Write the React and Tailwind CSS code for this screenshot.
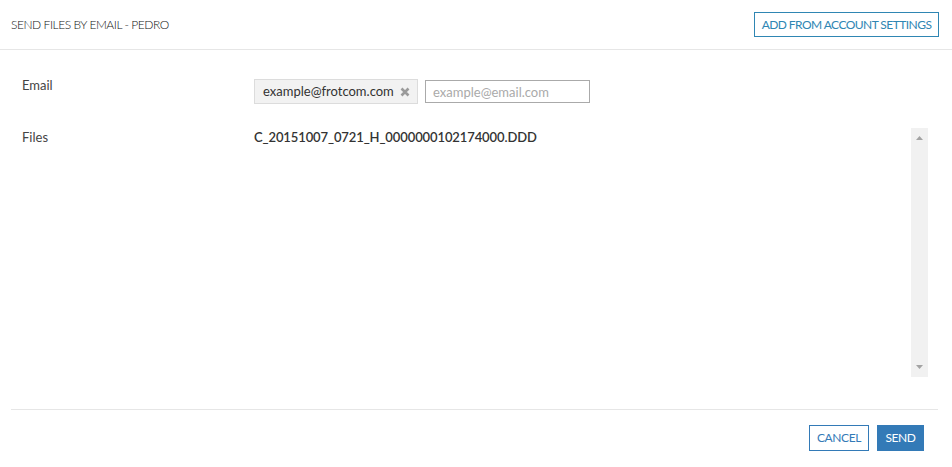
import React from "react";

const App = () => {
  return (
    <div className="w-[952px] h-[467px] bg-white text-[#333] font-['Lato',sans-serif]">
      {/* Header */}
      <div className="h-[50px] flex items-center justify-between pl-[11px] pr-[13px] border-b border-[#e6e6e6]">
        <div className="text-[12px] font-light tracking-[-0.45px] text-[#111]">SEND FILES BY EMAIL - PEDRO</div>
        <button className="h-[25px] w-[185px] border border-[#2f86b3] text-[#2f86b3] text-[12px] tracking-[-0.55px] flex items-center justify-center">
          ADD FROM ACCOUNT SETTINGS
        </button>
      </div>

      {/* Body */}
      <div className="pt-[27px] pl-[11px] pr-[24px]">
        {/* Email row */}
        <div className="flex items-start">
          <div className="w-[243px] pl-[11px] text-[13px] leading-[16px] text-[#444]">Email</div>
          <div className="flex items-start gap-[7px] mt-[2px]">
            <div className="h-[25px] w-[164px] bg-[#f2f2f2] border border-[#dcdcdc] flex items-center justify-between pl-[8px] pr-[7px] text-[13px] text-[#333]">
              <span>example@frotcom.com</span>
              <svg width="10" height="10" viewBox="0 0 10 10">
                <path d="M1.5 1.5 L8.5 8.5 M8.5 1.5 L1.5 8.5" stroke="#9a9a9a" strokeWidth="2.6" strokeLinecap="butt" />
              </svg>
            </div>
            <input
              className="mt-[1px] h-[23px] w-[165px] border border-[#aaa] px-[7px] text-[13px] outline-none placeholder:text-[#aaa]"
              placeholder="example@email.com"
            />
          </div>
        </div>

        {/* Files row */}
        <div className="flex items-start mt-[24px]">
          <div className="w-[243px] pl-[11px] pt-[1px] text-[13px] leading-[16px] text-[#444]">Files</div>
          <div className="flex-1 h-[249px] flex justify-between">
            <div className="pt-[1px] text-[13px] leading-[16px] font-semibold tracking-[-0.1px] text-[#333]">
              C_20151007_0721_H_0000000102174000.DDD
            </div>
            <div className="w-[17px] h-full bg-[#f1f1f1] flex flex-col items-center justify-between py-[8px]">
              <svg width="7" height="4" viewBox="0 0 7 4">
                <path d="M3.5 0 L7 4 L0 4 Z" fill="#a3a3a3" />
              </svg>
              <svg width="7" height="4" viewBox="0 0 7 4">
                <path d="M0 0 L7 0 L3.5 4 Z" fill="#a3a3a3" />
              </svg>
            </div>
          </div>
        </div>
      </div>

      {/* Footer */}
      <div className="ml-[11px] mr-[14px] mt-[32px] border-t border-[#e6e6e6] pt-[15px] flex justify-end gap-[8px] pr-[14px]">
        <button className="h-[26px] w-[60px] border border-[#337ab7] text-[#337ab7] text-[12px] tracking-[-0.4px]">
          CANCEL
        </button>
        <button className="h-[26px] w-[47px] bg-[#337ab7] text-white text-[12px] tracking-[-0.4px]">
          SEND
        </button>
      </div>
    </div>
  );
};

export default App;
